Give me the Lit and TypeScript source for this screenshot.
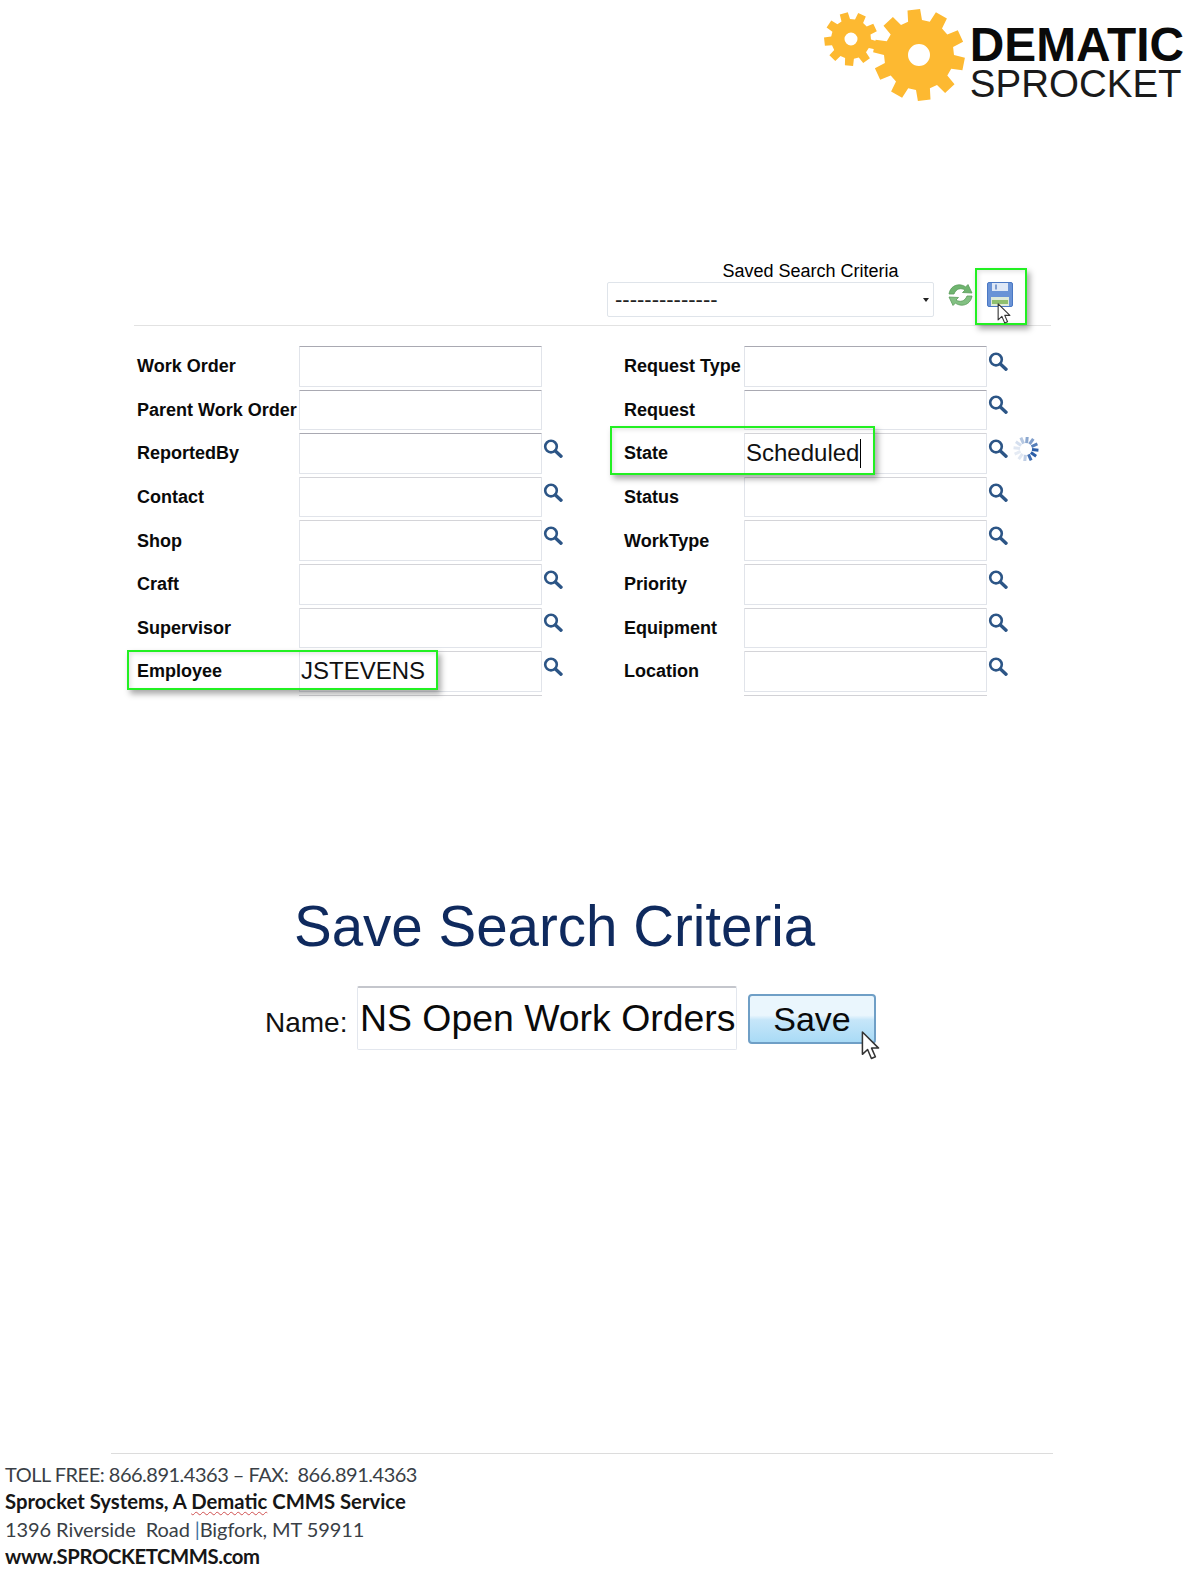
import { LitElement, html, css, svg } from "lit";
import { customElement } from "lit/decorators.js";

function gear(cx: number, cy: number, ro: number, ri: number, teeth: number, hole: number, rot: number) {
  const pts: string[] = [];
  const step = (Math.PI * 2) / teeth;
  for (let i = 0; i < teeth; i++) {
    const a = rot + i * step;
    const offs: [number, number][] = [
      [-0.32, ri], [-0.22, ro], [0.22, ro], [0.32, ri],
    ];
    for (const [o, r] of offs) {
      const t = a + o * step;
      pts.push(`${(cx + r * Math.cos(t)).toFixed(1)} ${(cy + r * Math.sin(t)).toFixed(1)}`);
    }
  }
  const d = `M${pts.join("L")}Z M${cx - hole} ${cy}a${hole} ${hole} 0 1 0 ${hole * 2} 0a${hole} ${hole} 0 1 0 ${-hole * 2} 0Z`;
  return svg`<path d=${d} fill="#fdb931" fill-rule="evenodd"></path>`;
}

const lens = html`<svg class="lens" viewBox="0 0 20 19" width="20" height="19"><circle cx="8" cy="7.6" r="5.8" fill="#fff" stroke="#2c5586" stroke-width="2.6"></circle><path d="M12.4 12l5.6 5.2" stroke="#2c5586" stroke-width="3.4" stroke-linecap="round"></path></svg>`;

const spinner = (() => {
  const ticks = [];
  const ops = [1, 1, 0.9, 0.3, 0.15, 0.12, 0.15, 0.2, 0.35, 0.55, 0.6, 0.8];
  for (let i = 0; i < 12; i++) {
    const a = (i * Math.PI) / 6 + 0.1;
    const x1 = 13 + 6 * Math.cos(a), y1 = 12 + 6 * Math.sin(a);
    const x2 = 13 + 12.5 * Math.cos(a), y2 = 12 + 12.5 * Math.sin(a);
    ticks.push(svg`<line x1=${x1} y1=${y1} x2=${x2} y2=${y2} stroke="#2c5ea8" stroke-width="3" stroke-opacity=${ops[i]}></line>`);
  }
  return html`<svg class="spin" viewBox="0 0 26 24" width="26" height="24">${ticks}</svg>`;
})();

const cursor = (w: number, h: number) => html`<svg viewBox="0 0 12 19" width=${w} height=${h}><path d="M.7.7v14.6l3.4-3.2 2.5 5.9 2.6-1.1-2.5-5.7h4.6z" fill="#fff" stroke="#333" stroke-width="1" stroke-linejoin="round"></path></svg>`;

interface Field { label: string; lens: boolean; value?: string; caret?: boolean; spin?: boolean; dark?: boolean; }

const LEFT: Field[] = [
  { label: "Work Order", lens: false, dark: true },
  { label: "Parent Work Order", lens: false, dark: true },
  { label: "ReportedBy", lens: true, dark: true },
  { label: "Contact", lens: true },
  { label: "Shop", lens: true },
  { label: "Craft", lens: true },
  { label: "Supervisor", lens: true },
  { label: "Employee", lens: true, value: "JSTEVENS" },
];
const RIGHT: Field[] = [
  { label: "Request Type", lens: true, dark: true },
  { label: "Request", lens: true, dark: true },
  { label: "State", lens: true, value: "Scheduled", caret: true, spin: true },
  { label: "Status", lens: true },
  { label: "WorkType", lens: true },
  { label: "Priority", lens: true },
  { label: "Equipment", lens: true },
  { label: "Location", lens: true },
];

@customElement("app-root")
export class AppRoot extends LitElement {
  static styles = css`
    :host { display: block; width: 1190px; height: 1581px; overflow: hidden; background: #fff; color: #000; font-family: "Liberation Sans", Arial, sans-serif; }
    .header { height: 118px; display: flex; justify-content: flex-end; padding-right: 6px; box-sizing: border-box; }
    .gears { margin-top: 8px; margin-right: -1.5px; }
    .brand { padding-top: 22.8px; }
    .brand div { white-space: nowrap; }
    .dematic { font-size: 47.8px; line-height: 43px; font-weight: 700; color: #0a0a0a; }
    .sprocket { font-size: 38.5px; line-height: 36px; color: #1a1a1a; }

    .toolbar { position: relative; margin: 143px 139px 0 134px; padding-left: 473px; padding-bottom: 8px; display: flex; align-items: flex-end; border-bottom: 1px solid #e2e2e2; }
    .saved { width: 327px; display: flex; flex-direction: column; align-items: center; }
    .saved-label { font-size: 18px; line-height: 20px; margin-bottom: 1px; margin-left: 80px; white-space: nowrap; }
    .select { box-sizing: border-box; width: 100%; height: 35px; border: 1px solid #dfe4ea; border-radius: 2px; display: flex; align-items: center; justify-content: space-between; padding: 0 4px 0 7px; font-size: 22px; color: #222; }
    .arrow { width: 0; height: 0; border: 3px solid transparent; border-top: 4px solid #222; border-bottom: 0; }
    .refresh { margin: 0 13px 9px 13px; display: block; }
    .floppy { margin-bottom: 10px; display: block; }
    .mark { position: absolute; box-sizing: border-box; border: 2px solid #22f022; box-shadow: 3px 4px 6px rgba(0, 0, 0, .34), inset 2px 2px 4px rgba(0, 0, 0, .1); pointer-events: none; }
    .mark-save { left: 841px; top: 7px; width: 52px; height: 57px; }
    .mark-save svg { position: absolute; left: 20px; top: 33px; }
    .mark-state { left: 473px; top: 80px; width: 265px; height: 49px; }
    .mark-emp { left: -10px; top: 304px; width: 311px; height: 40px; }

    .form { position: relative; margin: 20px 0 0 137px; display: grid; grid-template-columns: 162px 243px 82px 120px 243px 70px; grid-auto-rows: 43.6px; }
    .label { box-sizing: border-box; padding-top: 1px; font-size: 18px; font-weight: 700; height: 40.6px; display: flex; align-items: center; white-space: nowrap; color: #0a0a0a; }
    .input { box-sizing: border-box; height: 40.6px; border: 1px solid #e1e4ea; border-radius: 1px; display: flex; align-items: center; padding-left: 1px; font-size: 24px; color: #111; background: #fff; }
    .input.dark { border-top-color: #a9a9b2; }
    .input.soft { border-top-color: #d4d4d8; }
    .caret { display: inline-block; width: 1px; height: 29px; background: #000; margin-left: 1px; }
    .icons { display: flex; align-items: flex-start; padding: 5.8px 0 0 1px; gap: 5px; }
    .spin { margin-top: -2px; }
    .stub { height: 1px; background: #d2d2d6; }

    .title { margin: 159px 0 0 294px; font-size: 56.5px; line-height: 60px; font-weight: 400; color: #0f2a5e; white-space: nowrap; }
    .save-row { margin: 29px 0 0 265px; display: flex; align-items: flex-start; }
    .name { width: 92px; font-size: 28px; line-height: 32px; margin-top: 20.5px; color: #111; }
    .name-input { box-sizing: border-box; width: 380px; height: 64px; border: 1px solid #e3e7ee; border-top: 2px solid #c4c6cc; border-radius: 2px; display: flex; align-items: center; padding-left: 2px; font-size: 37.4px; white-space: nowrap; color: #0a0a0a; }
    .button { position: relative; box-sizing: border-box; margin: 8px 0 0 11px; width: 128px; height: 50px; border: 2px solid #6f9fc6; border-radius: 4px; background: linear-gradient(#eaf6fd 0 42%, #c6e6f9 52%, #a9dbf6 100%); display: flex; align-items: center; justify-content: center; font-size: 34px; color: #0a0a0a; }
    .button svg { position: absolute; left: 111px; top: 35px; }

    .foot-rule { margin: 403px 0 0 111px; width: 942px; height: 1px; background: #dcdcdc; }
    .footer { margin: 6.6px 0 0 5px; font-family: Lato, "Open Sans", sans-serif; font-size: 20px; line-height: 27.3px; color: #3a3f46; white-space: pre; }
    .tight { letter-spacing: -.5px; }
    .snug { letter-spacing: -.08px; }
    .footer b { color: #161616; font-weight: 700; font-size: 20.3px; }
    .footer b.web { letter-spacing: -.4px; }
    .wavy { text-decoration: underline wavy #d05050 1px; text-underline-offset: 2px; }
    .pipe { color: #3f6fa0; }
  `;

  private field(f: Field) {
    return html`
      <div class="label">${f.label}</div>
      <div class=${f.dark ? "input dark" : "input soft"}>${f.value ?? ""}${f.caret ? html`<span class="caret"></span>` : ""}</div>
    `;
  }

  render() {
    return html`
      <div class="header">
        <svg class="gears" viewBox="0 0 150 96" width="150" height="96">
          ${gear(30, 31, 27, 20, 9, 6.5, 0.25)}
          ${gear(98, 47, 46, 35, 10, 11, 0.2)}
        </svg>
        <div class="brand">
          <div class="dematic">DEMATIC</div>
          <div class="sprocket">SPROCKET</div>
        </div>
      </div>

      <div class="toolbar">
        <div class="saved">
          <div class="saved-label">Saved Search Criteria</div>
          <div class="select"><span>--------------</span><span class="arrow"></span></div>
        </div>
        <svg class="refresh" viewBox="0 0 27 26" width="27" height="26">
          <path d="M2 12C3 5 9 2 14 3c2 .4 3.500 1 4.500 2L21 2.500 25 11l-9.500-.5 2.500-2.500c-4-2.500-9-1.500-11 4z" fill="#6fb46f" stroke="#5a9c5a" stroke-width=".8"></path>
          <path d="M25 14c-1 7-7 10-12 9-2-.4-3.500-1-4.500-2L6 23.500 2 15l9.500.5L9 18c4 2.500 9 1.500 11-4z" fill="#82c082" stroke="#5a9c5a" stroke-width=".8"></path>
        </svg>
        <svg class="floppy" viewBox="0 0 26 25" width="26" height="25">
          <rect x=".5" y=".5" width="25" height="24" rx="1.500" fill="#6a93d6" stroke="#4a78c4"></rect>
          <rect x="5" y="1" width="16" height="8" fill="#dfe8f6"></rect>
          <rect x="8" y="2.500" width="2" height="5" fill="#7e9ccf"></rect>
          <rect x="4" y="15" width="18" height="9" fill="#dfead8"></rect>
          <rect x="5" y="18" width="16" height="4" fill="#8fc06e"></rect>
        </svg>
        <div class="mark mark-save">${cursor(14, 21)}</div>
      </div>

      <div class="form">
        ${LEFT.map((l, i) => {
          const r = RIGHT[i];
          return html`
            ${this.field(l)}
            <div class="icons">${l.lens ? lens : ""}</div>
            ${this.field(r)}
            <div class="icons">${r.lens ? lens : ""}${r.spin ? spinner : ""}</div>
          `;
        })}
        <div></div><div class="stub"></div><div></div><div></div><div class="stub"></div><div></div>
        <div class="mark mark-state"></div>
        <div class="mark mark-emp"></div>
      </div>

      <h1 class="title">Save Search Criteria</h1>
      <div class="save-row">
        <div class="name">Name:</div>
        <div class="name-input">NS Open Work Orders</div>
        <div class="button">Save${cursor(19, 29)}</div>
      </div>

      <div class="foot-rule"></div>
      <div class="footer"><div class="tight">TOLL FREE: 866.891.4363 – FAX:  866.891.4363</div><div><b>Sprocket Systems, A <span class="wavy">Dematic</span> CMMS Service</b></div><div class="snug">1396 Riverside  Road <span class="pipe">|</span>Bigfork, MT 59911</div><div><b class="web">www.SPROCKETCMMS.com</b></div></div>
    `;
  }
}
